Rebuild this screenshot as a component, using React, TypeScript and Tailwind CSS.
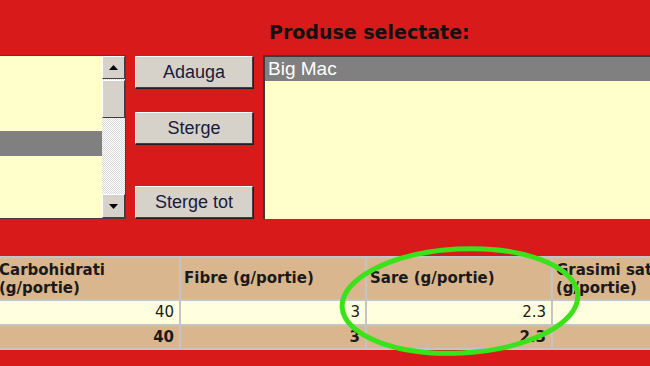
export default function App() {
  const btn =
    "w-[118px] h-[32px] bg-[#d6d2ca] border border-t-white border-l-white border-r-[#404040] border-b-[#404040] shadow-[1px_1px_0_#202020] text-[18px] text-[#1a1a3a] flex items-center justify-center";

  return (
    <div className="relative w-[650px] h-[366px] overflow-hidden bg-[#d81a1a] font-['Liberation_Sans',Arial,sans-serif]">
      {/* top title */}
      <div className="h-[55px] pl-[269px] pt-[21px]">
        <h2 className="font-['DejaVu_Sans',Verdana,sans-serif] font-bold text-[19px] leading-[22px] text-[#111]">
          Produse selectate:
        </h2>
      </div>

      {/* lists + buttons */}
      <div className="flex h-[164px]">
        <div className="flex w-[126px] border-t border-b border-[#404040]">
          <div className="w-[102px] bg-[#ffffcc] pt-[75px]">
            <div className="h-[25px] bg-[#808080]" />
          </div>
          <div className="w-[23px] flex flex-col bg-[repeating-conic-gradient(#ffffff_0_25%,#d8d8d8_0_50%)] bg-[length:2px_2px]">
            <div className="h-[23px] bg-[#d6d2ca] border border-t-white border-l-white border-r-[#404040] border-b-[#404040] flex items-center justify-center">
              <svg width="9" height="5" viewBox="0 0 9 5"><path d="M4.5 0 L9 5 L0 5 Z" fill="#000" /></svg>
            </div>
            <div className="mt-[1px] h-[38px] bg-[#d6d2ca] border border-t-white border-l-white border-r-[#404040] border-b-[#404040]" />
            <div className="flex-1" />
            <div className="h-[24px] bg-[#d6d2ca] border border-t-white border-l-white border-r-[#404040] border-b-[#404040] flex items-center justify-center">
              <svg width="9" height="5" viewBox="0 0 9 5"><path d="M0 0 L9 0 L4.5 5 Z" fill="#000" /></svg>
            </div>
          </div>
          <div className="w-[1px] bg-[#404040]" />
        </div>

        <div className="ml-[9px] w-[119px] flex flex-col pt-[1px]">
          <button className={btn}>Adauga</button>
          <button className={btn + " mt-[24px]"}>Sterge</button>
          <button className={btn + " mt-[42px]"}>Sterge tot</button>
        </div>

        <div className="ml-[9px] flex-1 bg-[#ffffcc] border-t-2 border-l-2 border-[#3a3a3a]">
          <div className="h-[24px] bg-[#808080] text-white text-[19px] leading-[24px] pl-[3px]">Big Mac</div>
        </div>
      </div>

      {/* nutrition table */}
      <div className="mt-[37px] grid grid-cols-[179px_184px_184px_1fr] grid-rows-[41px_23px_22px] gap-[2px] bg-[#c4c4c4] py-[2px] font-['DejaVu_Sans',Verdana,sans-serif] text-[15px] text-[#1a1a1a]">
        <div className="bg-[#d9b68e] font-bold leading-[18px] flex items-center -ml-[1px] whitespace-nowrap">
          <span>Carbohidrati<br />(g/portie)</span>
        </div>
        <div className="bg-[#d9b68e] font-bold flex items-center pl-[3px] whitespace-nowrap">Fibre (g/portie)</div>
        <div className="bg-[#d9b68e] font-bold flex items-center pl-[3px] whitespace-nowrap">Sare (g/portie)</div>
        <div className="bg-[#d9b68e] font-bold leading-[18px] flex items-center pl-[3px] whitespace-nowrap overflow-hidden">
          <span>Grasimi sat<br />(g/portie)</span>
        </div>

        <div className="bg-[#ffffe0] text-right pr-[5px] leading-[23px]">40</div>
        <div className="bg-[#ffffe0] text-right pr-[5px] leading-[23px]">3</div>
        <div className="bg-[#ffffe0] text-right pr-[5px] leading-[23px]">2.3</div>
        <div className="bg-[#ffffe0]" />

        <div className="bg-[#d9b68e] font-bold text-right pr-[5px] leading-[22px]">40</div>
        <div className="bg-[#d9b68e] font-bold text-right pr-[5px] leading-[22px]">3</div>
        <div className="bg-[#d9b68e] font-bold text-right pr-[5px] leading-[22px]">2.3</div>
        <div className="bg-[#d9b68e]" />
      </div>

      {/* green highlight ellipse */}
      <svg className="absolute left-0 top-0 pointer-events-none" width="650" height="366">
        <ellipse cx="460" cy="301" rx="118" ry="52" fill="none" stroke="#3be21c" strokeWidth="5" transform="rotate(-3 460 301)" />
      </svg>
    </div>
  );
}
